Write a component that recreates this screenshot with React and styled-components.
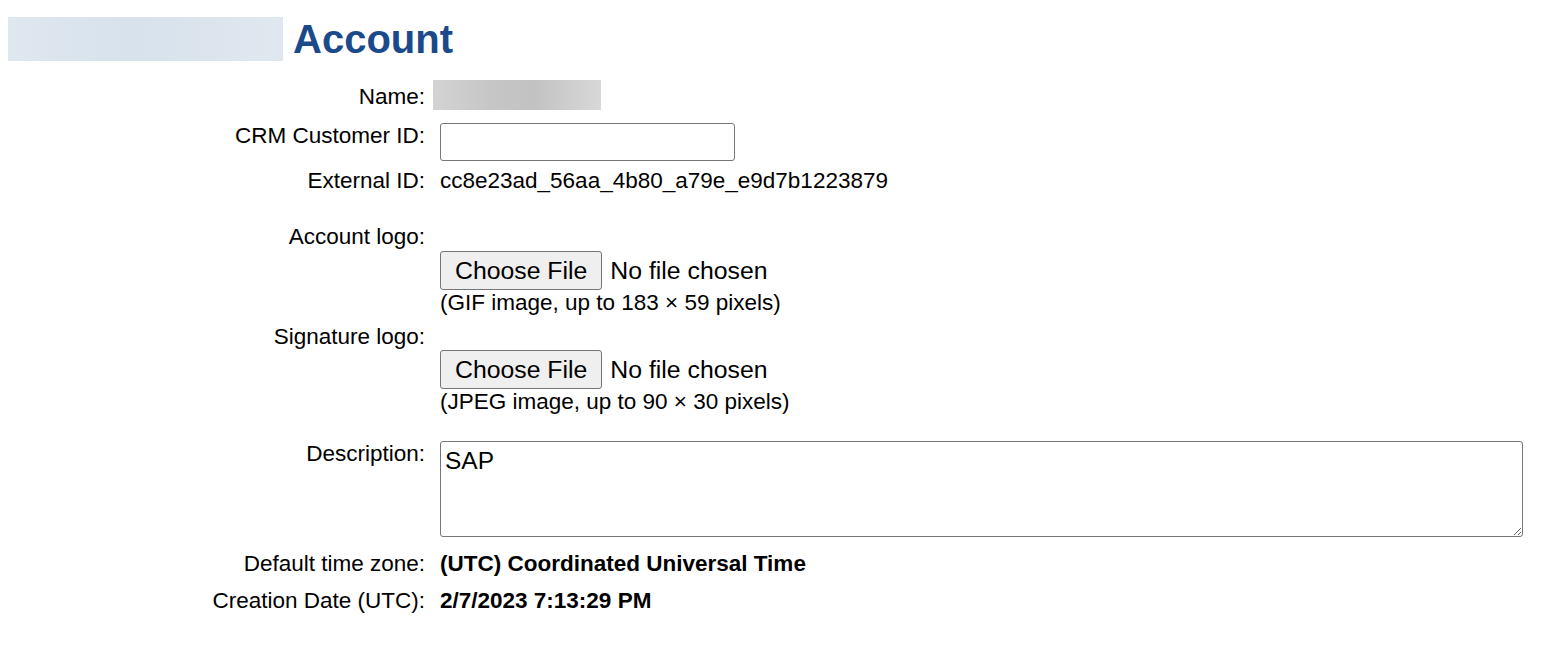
import React from "react";
import styled, { createGlobalStyle } from "styled-components";

const Global = createGlobalStyle`
  html, body { margin: 0; padding: 0; background: #fff; }
  body { font-family: "Liberation Sans", Arial, sans-serif; color: #000; }
`;

const Page = styled.div`
  padding: 17px 8px 40px 8px;
`;

const Header = styled.header`
  display: flex;
  align-items: center;
  gap: 10px;
  height: 44px;
`;

const LogoBlur = styled.div`
  width: 275px;
  height: 44px;
  background: linear-gradient(90deg, #dfe7f0 0%, #d7e2ec 45%, #dce5ee 75%, #e0e7ef 100%);
`;

const Title = styled.h1`
  margin: 0;
  font-size: 40px;
  font-weight: 700;
  line-height: 44px;
  color: #1b4a8b;
`;

const Form = styled.div`
  display: flex;
  flex-direction: column;
  padding-right: 15px;
`;

const Row = styled.div`
  display: grid;
  grid-template-columns: 417px 1fr;
  column-gap: 15px;
  align-items: start;
  margin-top: ${(p) => p.$mt || 0}px;
`;

const Label = styled.div`
  text-align: right;
  font-size: 22.5px;
  line-height: 26px;
  padding-top: ${(p) => p.$pt || 0}px;
  white-space: nowrap;
`;

const Value = styled.div`
  font-size: 22.5px;
  line-height: 26px;
  font-weight: ${(p) => (p.$bold ? 700 : 400)};
  white-space: nowrap;
`;

const NameBlur = styled.div`
  width: 168px;
  height: 30px;
  margin-left: -7px;
  background: linear-gradient(90deg, #d3d3d3 0%, #c6c6c6 35%, #c2c2c2 60%, #d8d8d8 100%);
`;

const TextInput = styled.input`
  box-sizing: border-box;
  width: 295px;
  height: 38px;
  border: 1px solid #767676;
  border-radius: 3px;
  font-family: "Liberation Sans", Arial, sans-serif;
  font-size: 22.5px;
  padding: 2px 4px;
  display: block;
`;

const FileInput = styled.input`
  display: block;
  font-family: "Liberation Sans", Arial, sans-serif;
  font-size: 24.8px;
  line-height: 29px;
  height: 39px;
  color: #000;
  &::file-selector-button {
    box-sizing: border-box;
    height: 39px;
    font-family: "Liberation Sans", Arial, sans-serif;
    font-size: 24.8px;
    background: #efefef;
    border: 1px solid #767676;
    border-radius: 3px;
    padding: 0 14px;
    margin-right: 8px;
    color: #000;
  }
`;

const Hint = styled.div`
  font-size: 22.5px;
  line-height: 26px;
`;

const TextArea = styled.textarea`
  box-sizing: border-box;
  display: block;
  width: 100%;
  height: 96px;
  border: 1px solid #767676;
  border-radius: 3px;
  font-family: "Liberation Sans", Arial, sans-serif;
  font-size: 24.5px;
  line-height: 28px;
  padding: 5px 4px;
  color: #000;
`;

export default function App() {
  return (
    <>
      <Global />
      <Page>
        <Header>
          <LogoBlur />
          <Title>Account</Title>
        </Header>
        <Form>
          <Row $mt={19}>
            <Label $pt={4}>Name:</Label>
            <NameBlur />
          </Row>
          <Row $mt={13}>
            <Label>CRM Customer ID:</Label>
            <TextInput type="text" />
          </Row>
          <Row $mt={7}>
            <Label>External ID:</Label>
            <Value>cc8e23ad_56aa_4b80_a79e_e9d7b1223879</Value>
          </Row>
          <Row $mt={30}>
            <Label>Account logo:</Label>
          </Row>
          <Row $mt={1}>
            <Label />
            <div>
              <FileInput type="file" />
              <Hint>(GIF image, up to 183 × 59 pixels)</Hint>
            </div>
          </Row>
          <Row $mt={8}>
            <Label>Signature logo:</Label>
          </Row>
          <Row $mt={0}>
            <Label />
            <div>
              <FileInput type="file" />
              <Hint>(JPEG image, up to 90 × 30 pixels)</Hint>
            </div>
          </Row>
          <Row $mt={26}>
            <Label>Description:</Label>
            <TextArea defaultValue="SAP" />
          </Row>
          <Row $mt={14}>
            <Label>Default time zone:</Label>
            <Value $bold>(UTC) Coordinated Universal Time</Value>
          </Row>
          <Row $mt={11}>
            <Label>Creation Date (UTC):</Label>
            <Value $bold>2/7/2023 7:13:29 PM</Value>
          </Row>
        </Form>
      </Page>
    </>
  );
}
